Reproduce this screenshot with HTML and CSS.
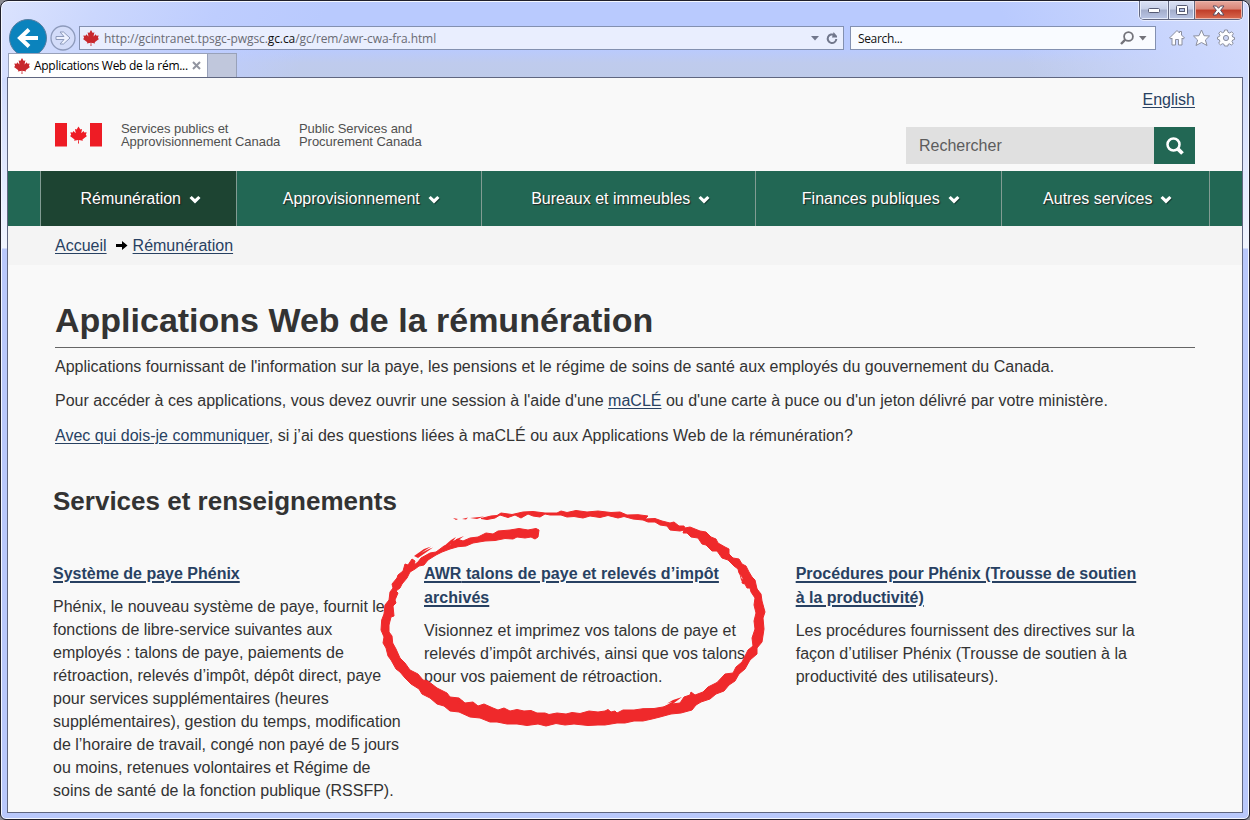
FILE: index.html
```
<!DOCTYPE html>
<html lang="fr">
<head>
<meta charset="utf-8">
<title>Applications Web de la rémunération</title>
<link rel="stylesheet" href="styles.css">
</head>
<body>
<svg width="0" height="0" class="defs" aria-hidden="true">
  <symbol id="leaf" viewBox="0 0 100 100">
    <path d="M50 0 39 18 29 14 34 40 20 27 16 36 2 34 7 50 0 56 27 76 24 84 48 80 47 100 53 100 52 80 76 84 73 76 100 56 93 50 98 34 84 36 80 27 66 40 71 14 61 18Z"/>
  </symbol>
  <symbol id="chev" viewBox="0 0 12 9"><path d="M.5 3.100 2.700 .9 6 4 9.300 .9 11.500 3.100 6 8.500Z"/></symbol>
</svg>
<div class="window">
  <div class="controls">
    <span class="ctl"><svg width="14" height="8"><rect x="1.500" y="2.500" width="11" height="4" rx="1" fill="#fff" stroke="#565b74"/></svg></span>
    <span class="ctl mid"><svg width="12" height="11"><rect x=".5" y=".5" width="11" height="9" rx="1" fill="#fff" stroke="#565b74"/><rect x="3.500" y="3.500" width="5" height="3" fill="#b5c2e6" stroke="#565b74"/></svg></span>
    <span class="ctl close"><svg width="13" height="11"><path d="M1 1H4.500L6.500 3.300 8.500 1H12L8.600 5.300 12 10H8.500L6.500 7.300 4.500 10H1L4.400 5.300Z" fill="#fff" stroke="#574c61"/></svg></span>
  </div>
  <div class="toolbar">
    <svg class="back" width="38" height="38"><circle cx="19" cy="18" r="18.500" fill="#0b83bd" stroke="#567da0"/><path d="M29 18H12M20 9.500 11 18 20 26.500" fill="none" stroke="#fff" stroke-width="4"/></svg>
    <svg class="fwd" width="26" height="26"><circle cx="13" cy="13" r="12" fill="#d3dcf9" stroke="#8d9abb" stroke-width="1.300"/><path d="M6 11.500H14L10 7H13.500L20 13 13.500 19H10L14 14.500H6Z" fill="#eef2ff" stroke="#8d9abb"/></svg>
    <div class="address">
      <svg class="leaf" width="16" height="16"><use href="#leaf"/></svg>
      <span class="url">http://gcintranet.tpsgc-pwgsc.<b>gc.ca</b>/gc/rem/awr-cwa-fra.html</span>
      <svg class="tri" width="8" height="5"><path d="M0 0H8L4 4.500Z" fill="#71778c"/></svg>
      <svg class="reload" width="13" height="14"><path d="M8.500 4.200A4.300 4.300 0 1 0 10.300 8" fill="none" stroke="#71778c" stroke-width="2"/><path d="M6 6.500 7.500 1.500V1L11 5V6.500Z" fill="#71778c"/></svg>
    </div>
    <div class="search">
      <span>Search...</span>
      <svg class="lens" width="14" height="14"><circle cx="8.500" cy="5.500" r="4.400" fill="none" stroke="#73737a" stroke-width="1.800"/><path d="M5.300 8.700 1 13" stroke="#73737a" stroke-width="2.400"/></svg>
      <svg class="tri2" width="8" height="5"><path d="M0 0H7.500L3.750 4.500Z" fill="#73737a"/></svg>
    </div>
    <svg class="tools" width="68" height="18" fill="#fdfdff" stroke="#8b8f9e" stroke-width="1">
      <path d="M1.500 9 9 1.500 11.500 4V2.500H13.500V6L16.500 9 15 10 14 9V16H10.500V10.500H7.500V16H4V9L3 10Z"/>
      <path d="M33.500 1 36 6.700 41.500 7 37.400 11 39 16.500 33.500 13.500 28 16.500 29.600 11 25.500 7 31 6.700Z"/>
      <path d="M56.600 1H59.400L60 3.300 61.500 4 63.700 2.800 65.400 4.600 64.200 6.600 64.700 8 66.500 8.500V10.500L64.700 11 64 12.500 65.200 14.500 63.400 16 61.400 14.800 60 15.500V17H56.500L56 15.300 54.500 14.700 52.500 15.900 50.700 14.200 51.900 12.200 51.300 10.800 49.500 10.200V8.200L51.300 7.600 52 6.200 50.700 4.200 52.500 2.500 54.500 3.700 56 3.100Z"/><circle cx="58" cy="9" r="2.600" fill="#ccd5f5"/>
    </svg>
  </div>
  <div class="tabs">
    <div class="tab"><svg class="leaf" width="16" height="16"><use href="#leaf"/></svg><span>Applications Web de la rém...</span><svg class="x" width="9" height="9"><path d="M1 1 8 8M8 1 1 8" stroke="#9295a0" stroke-width="2"/></svg></div>
    <div class="newtab"></div>
  </div>
  <div class="page">
    <header class="head">
      <div class="brand">
        <svg width="48" height="24" fill="#ee1c25"><rect width="12" height="23.500"/><rect x="35" width="12" height="23.500"/><use href="#leaf" x="15" y="2" width="17" height="20"/></svg>
        <p class="fr">Services publics et<br>Approvisionnement Canada</p>
        <p class="en">Public Services and<br>Procurement Canada</p>
      </div>
      <div class="side">
        <a class="lang">English</a>
        <div class="find"><span>Rechercher</span><i><svg width="20" height="20"><circle cx="8.500" cy="8.500" r="6" fill="none" stroke="#fff" stroke-width="2.500"/><path d="M12.800 12.800 17.500 17.500" stroke="#fff" stroke-width="3.800"/></svg></i></div>
      </div>
    </header>
    <nav class="nav">
      <div class="item active w1">Rémunération<svg width="12" height="9"><use href="#chev"/></svg></div>
      <div class="item w2">Approvisionnement<svg width="12" height="9"><use href="#chev"/></svg></div>
      <div class="item w3">Bureaux et immeubles<svg width="12" height="9"><use href="#chev"/></svg></div>
      <div class="item w4">Finances publiques<svg width="12" height="9"><use href="#chev"/></svg></div>
      <div class="item w5">Autres services<svg width="12" height="9"><use href="#chev"/></svg></div>
    </nav>
    <div class="crumbs"><a>Accueil</a><svg width="12" height="9"><path d="M0 3H6V0L11.500 4.500 6 9V6H0Z"/></svg><a>Rémunération</a></div>
    <main>
      <h1>Applications Web de la rémunération</h1>
      <p class="para">Applications fournissant de l'information sur la paye, les pensions et le régime de soins de santé aux employés du gouvernement du Canada.</p>
      <p class="para">Pour accéder à ces applications, vous devez ouvrir une session à l'aide d'une <a>maCLÉ</a> ou d'une carte à puce ou d'un jeton délivré par votre ministère.</p>
      <p class="para contact"><a>Avec qui dois-je communiquer</a>, si j’ai des questions liées à maCLÉ ou aux Applications Web de la rémunération?</p>
      <h2>Services et renseignements</h2>
      <div class="cols">
        <section><h3><a>Système de paye Phénix</a></h3>
          <p>Phénix, le nouveau système de paye, fournit les<br>fonctions de libre-service suivantes aux<br>employés : talons de paye, paiements de<br>rétroaction, relevés d’impôt, dépôt direct, paye<br>pour services supplémentaires (heures<br>supplémentaires), gestion du temps, modification<br>de l’horaire de travail, congé non payé de 5 jours<br>ou moins, retenues volontaires et Régime de<br>soins de santé de la fonction publique (RSSFP).</p></section>
        <section><h3 class="wide"><a><abbr>AWR</abbr> talons de paye et relevés d’impôt<br>archivés</a></h3>
          <p>Visionnez et imprimez vos talons de paye et<br>relevés d’impôt archivés, ainsi que vos talons<br>pour vos paiement de rétroaction.</p></section>
        <section><h3><a>Procédures pour Phénix (Trousse de soutien<br>à la productivité)</a></h3>
          <p>Les procédures fournissent des directives sur la<br>façon d’utiliser Phénix (Trousse de soutien à la<br>productivité des utilisateurs).</p></section>
      </div>
    </main>
  </div>
  <svg class="mark" width="390" height="220" viewBox="378 508 390 220" fill="#ef292b">
    <path stroke="#ef292b" stroke-width="1" stroke-linejoin="round" d="M536 528.500 539 530 538 537 535 539 531 537 525 538 517 537 513 539 505 538.500 495 540.500 485 541 473 543 466 546 458 546.700 450 549 442 552 436 555 428 560 424 565 419 566 415 569 410 572 407 578 402 584 400 588 396 591 398 593 395 600 396 603 393 606 394 616 391 617 389 625 389 632 392 636 392.700 643 396 649 400 658 405 663 410 670 418 674 423 680 428 681 437 688 447 693 450 697 459 698 465 703 473 702 478 706 484 704 493 708 498 710 504 708 510 711 517 709.500 524 711 531 710.500 537 713 545 713 549 714.500 557 713 566 714 572 712.500 580 713.500 589 711 598 712 605 711 608 709.500 611 712 615 711 617 713 623 710 634 710 643 708.700 654 708.500 663 707 672 704 680 703 684 697 690 695 691 692 695 695 703 692 708 687 717 682.500 725 674 733 673 736 667 742 662 748 650 753 646 752 638 755 629 754 621 756 613 754 605 755 598 751 592 750 588 747 588 745 584 742 583 743 578 739 573 738 569 734 566 728 560 722 558 717 551 712 551 706 545 702 544 698 538 691 537 687 533 683 533 684 530 680 531 670 530 667 526 660 525 655 522 648 522 643 520 633 519 624 516.500 618 518 608 515.500 600 517.500 590 516 583 518 574 516.500 567 517 561 515 550 515 545 514 540 517 533 516 528 514 521 518 515 515 508 517.500 500 515 495 518 487 519.500 481 518.500 491 516 497 515.500 501 513 512 514.500 523 512 533 511.500 545 513 557 513 561 511 567 512.500 576 510.500 587 512 598 511 611 512.500 620 512 627 515 638 514.700 648 516 645 519 655 518.500 662 521 670 523 674 522 679 526 684 526 685 528 690 527 700 531 706 532 711 537 716 539 718 543 725 547 729 549 729 554 733 558 739 559 742 564 746 566 749 572 752 577 755 580 757 589 761 594 762 601 765 612 763 618 764 629 762 642 757 648 757 654 750 660 745 669 739 674 735 681 729 685 724 691 716 694 710 699 701 702 696 705 692 710 681 713 671 714 660 717 652 719 643 721 634 721 625 723 617 723 605 725 598 725 588 725.500 574 724 565 725 556 723.500 546 726 538 724 527 725.500 517 724 507 724 497 722 490 722 480 718 470 717 459 712 450 711 444 706 437 704 430 698 422 694 419 689 411 684 405 678 400 672 396 669 391 660 388 656 386 648 383 643 384 637 381 630 381.700 620 384 614 385 605 389 600 390 592 393 588 392 584 397 578 398 575 403 571 405 564 408 565 412 559 415 561 414 565 418 562 421 558 430 553 436 552 444 546 451 545 457 539 463 541 470 538 478 537 486 533 493 534 498 531 510 530 519 528.500 528 530Z"/>
    <path d="M453 518 458 519 456 520ZM462 519 468 517.500 466 519.500ZM470 518 484 516.500 477 519ZM414 556 424 549 431 546.500 421 553 429 549 433 547.500 418 558ZM443 547 451 540 456 537 453 541 459 538 464 536 453 544ZM457 702 463 700 459 704ZM665 706 672 702 667 703.500 673 700 682 697 670 706ZM738 568 744 585 741 580ZM754 583 761 595 757 592Z"/>
  </svg>
</div>
</body>
</html>
```
FILE: styles.css
```
body { margin: 0; background: #8b8b91; font-family: "Liberation Sans", Arial, sans-serif; font-size: 16px; color: #333; }
* { box-sizing: border-box; }
p, h1, h2, h3 { margin: 0; white-space: nowrap; }
.defs { position: absolute; }
svg { flex: none; display: block; }
.window { position: relative; width: 1250px; height: 820px; padding: 19px 7px 7px; border: 1px solid #20202b; border-radius: 8px 8px 6px 6px; overflow: hidden;
  background: linear-gradient(115deg, #dbe3fe 0, #cbd7fd 90px, #becdfe 200px, #becdfe00 300px) 0 0 / 100% 77px no-repeat,
    linear-gradient(245deg, #d3ddfe 0, #cbd7fd 70px, #cbd7fd00 230px) 0 0 / 100% 77px no-repeat,
    linear-gradient(#b9cafe 0, #b9cafe 48px, #bfcbed 62px, #becbea 77px) 0 0 / 100% 77px no-repeat,
    linear-gradient(#d0dbfd 77px, #f1f5ff 247px, #b9c8fb 248px);
  box-shadow: inset 0 0 0 1px #f4f7ff; }
.controls { position: absolute; top: 0; right: 6px; display: flex; width: 104px; height: 19px; border: 1px solid #62677f; border-top: 0; border-radius: 0 0 5px 5px; overflow: hidden; box-shadow: 0 0 0 1px #e8edff; }
.ctl { width: 28px; display: flex; align-items: center; justify-content: center; background: linear-gradient(#dbe2f5 0, #c7d0e8 45%, #a3adcb 50%, #bac5e5); box-shadow: inset 0 0 0 1px #e5ebfa; }
.ctl.mid { width: 27px; border: solid #62677f; border-width: 0 1px; }
.ctl.close { flex: 1; background: linear-gradient(#e7a99f 0, #d98576 45%, #c03c28 50%, #d96a50); box-shadow: inset 0 0 0 1px #edb7ac; }
.toolbar { display: flex; height: 33px; padding: 0 6px 0 1px; }
.back { overflow: visible; }
.fwd { margin: 5px 0 0 3px; }
.address { margin: 6px 0 0 3px; width: 765px; height: 24px; border: 1px solid #8390b0; background: #e9eefe; display: flex; align-items: center; font: 12px "Open Sans", "Noto Sans", sans-serif; color: #6a6c74; }
.leaf { fill: #c8282d; }
.address .leaf { margin: 0 5px 0 3px; }
.url { width: 700px; white-space: nowrap; letter-spacing: -.09px; }
.url b { font-weight: 400; color: #111; }
.tri { margin-left: 7px; }
.reload { margin-left: 7px; }
.search { margin: 6px 0 0 6px; width: 306px; height: 24px; border: 1px solid #8390b0; background: #f9fbff; display: flex; align-items: center; font: 12px "Open Sans", sans-serif; color: #111; padding-left: 7px; }
.search span { width: 262px; letter-spacing: -.35px; }
.tri2 { margin-left: 5px; }
.tools { margin: 9px 0 0 12px; }
.tabs { display: flex; height: 24px; position: relative; }
.tab { width: 200px; height: 24px; border: solid #98a1b9; border-width: 1px 1px 0; background: #fff; display: flex; align-items: center; font: 12px "Open Sans", sans-serif; color: #000; padding: 0 0 0 5px; }
.tab .x { margin-top: -1px; }
.tab span { width: 158px; margin-left: 4px; white-space: nowrap; letter-spacing: -.28px; }
.newtab { width: 29px; border: solid #98a1b9; border-width: 1px 1px 0 0; background: #c0c7dc; }
.page { height: 736px; margin: 0 -1px; border: 1px solid #5f6680; background: #f9f9f9; overflow: hidden; }
.head { height: 93px; padding: 0 47px; display: flex; justify-content: space-between; }
.brand { display: flex; padding-top: 45px; }
.brand p { font: 13px/13.500px "Liberation Sans", sans-serif; color: #505050; margin-top: -1.500px; letter-spacing: -.05px; }
.brand .fr { width: 178px; margin-left: 18px; }
.side { display: flex; flex-direction: column; align-items: flex-end; }
a { color: #284162; text-decoration: underline; text-underline-offset: 2px; }
.lang { margin-top: 12px; line-height: 20px; }
.find { margin-top: 17px; width: 289px; height: 37px; background: #e0e0e0; color: #5c5c5c; display: flex; justify-content: space-between; line-height: 37px; padding-left: 13px; }
.find i { width: 41px; background: #226754; display: flex; align-items: center; justify-content: center; }
.nav { height: 55px; background: #226754; display: flex; padding-left: 32px; }
.item { display: flex; align-items: center; justify-content: center; gap: 8px; padding-left: 4.500px; border-right: 1px solid #829c93; color: #fff; text-shadow: 1px 1px 1px #222; white-space: nowrap; }
.item svg { fill: #fff; filter: drop-shadow(1px 1px 0 #174136); margin-top: 2px; }
.item.active { background: #1d4432; border-left: 1px solid #829c93; }
.w1 { width: 197px; } .w2 { width: 245px; } .w3 { width: 274px; } .w4 { width: 246px; } .w5 { width: 208px; }
.crumbs { height: 39px; background: #f4f4f4; padding-left: 47px; display: flex; align-items: center; }
.crumbs svg { margin: 0 5px 0 9px; }
main { padding: 35px 47px 0; }
h1 { font-size: 34px; line-height: 40px; height: 48px; border-bottom: 1px solid #666; margin-bottom: 7px; }
.para { line-height: 23px; margin-bottom: 11px; }
.para.contact { margin: 12px 0 11.500px; letter-spacing: .022px; }
h2 { font-size: 26px; line-height: 30px; margin: 28px 0 0 -2px; padding-top: 11px; }
.cols { display: grid; grid-template-columns: 371px 371.700px 1fr; margin: 46px 0 0 -2px; }
.cols h3 { font-size: 16px; line-height: 24px; margin-bottom: 9px; }
.cols h3.wide { letter-spacing: .04px; }
.cols h3 a { text-decoration-thickness: 2px; }
abbr { border-bottom: 1px dotted #59677d; }
.cols p { line-height: 23px; }
.mark { position: absolute; left: 377px; top: 507px; }
```
